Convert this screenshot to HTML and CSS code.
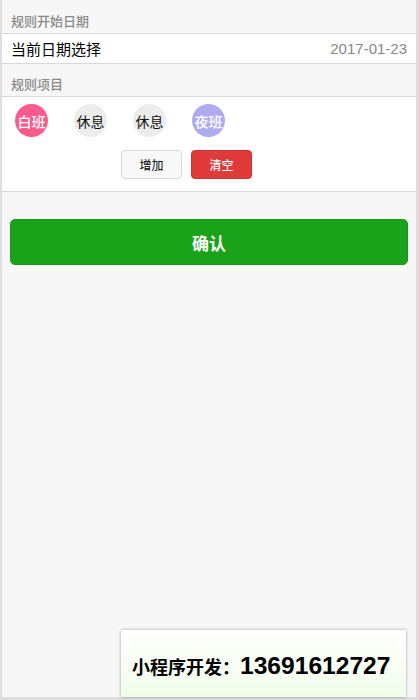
FILE: index.html
```html
<!DOCTYPE html>
<html lang="zh-CN">
<head>
<meta charset="utf-8">
<title>规则</title>
<link rel="stylesheet" href="styles.css">
</head>
<body>
<div class="frame">
  <div class="page">
    <div class="section-title section-title-first">规则开始日期</div>
    <div class="cell">
      <span class="cell-label">当前日期选择</span>
      <span class="cell-value">2017-01-23</span>
    </div>
    <div class="section-title">规则项目</div>
    <div class="panel">
      <div class="shifts">
        <span class="shift shift-day">白班</span>
        <span class="shift shift-rest">休息</span>
        <span class="shift shift-rest">休息</span>
        <span class="shift shift-night">夜班</span>
      </div>
      <div class="actions">
        <button class="btn btn-default">增加</button>
        <button class="btn btn-warn">清空</button>
      </div>
    </div>
    <div class="confirm-wrap">
      <button class="btn-primary">确认</button>
    </div>
  </div>
</div>
<div class="promo"><span class="promo-label">小程序开发：</span><span class="promo-phone">13691612727</span></div>
</body>
</html>
```
FILE: styles.css
```css
html, body {
  margin: 0;
  padding: 0;
  background: #dedede;
  font-family: "Noto Sans CJK SC", "Liberation Sans", sans-serif;
}
.frame {
  width: 419px;
  height: 700px;
  display: flex;
  background: #dedede;
}
.page {
  margin-left: 2px;
  width: 414px;
  height: 697px;
  background: #f7f7f7;
  display: flex;
  flex-direction: column;
}
.section-title {
  height: 33px;
  box-sizing: border-box;
  padding: 10px 0 0 9px;
  font-size: 13px;
  line-height: 20px;
  color: #8a8a8a;
  font-weight: 500;
  border-bottom: 1px solid #d9d9d9;
}
.section-title-first {
  height: 34px;
  padding-top: 11px;
}
.cell {
  height: 29px;
  background: #fff;
  border-bottom: 1px solid #d9d9d9;
  display: flex;
  align-items: center;
  justify-content: space-between;
  padding: 0 9px;
}
.cell-label {
  font-size: 15px;
  color: #000;
}
.cell-value {
  font-family: "Liberation Sans", sans-serif;
  font-size: 15px;
  color: #888;
}
.panel {
  background: #fff;
  height: 95px;
  box-sizing: border-box;
  border-bottom: 1px solid #d9d9d9;
  padding-top: 7px;
}
.shifts {
  display: flex;
  gap: 26px;
  padding-left: 13px;
}
.shift {
  width: 33px;
  height: 33px;
  border-radius: 50%;
  display: flex;
  align-items: center;
  justify-content: center;
  font-size: 14px;
  font-weight: 500;
  color: #fff;
}
.shift-day { background: #fb5a8d; }
.shift-rest { background: #ececec; color: #111; font-weight: 400; }
.shift-night { background: #b0abee; }
.actions {
  display: flex;
  gap: 9px;
  padding-left: 119px;
  margin-top: 13px;
}
.btn {
  width: 61px;
  height: 29px;
  border-radius: 4px;
  font-family: "Noto Sans CJK SC", sans-serif;
  font-size: 12px;
  padding: 0;
  cursor: pointer;
}
.btn-default {
  background: #f8f8f8;
  border: 1px solid #d8d8d8;
  color: #000;
}
.btn-warn {
  background: #e13a3b;
  border: 1px solid #d33232;
  color: #fff;
  font-weight: 500;
}
.confirm-wrap {
  padding: 27px 8px 0 8px;
}
.btn-primary {
  width: 398px;
  height: 46px;
  background: #1aa31a;
  border: 1px solid #169516;
  border-radius: 5px;
  color: #fff;
  font-family: "Noto Sans CJK SC", sans-serif;
  font-size: 17px;
  font-weight: 700;
  padding: 0;
}
.promo {
  position: absolute;
  left: 121px;
  top: 630px;
  width: 285px;
  height: 67px;
  box-sizing: border-box;
  background: linear-gradient(#ffffff, #f1fdea);
  box-shadow: 0 0 3px rgba(0, 0, 0, 0.35);
  display: flex;
  align-items: center;
  padding: 4px 0 0 11px;
  color: #000;
}
.promo-label {
  font-size: 18px;
  font-weight: 700;
}
.promo-phone {
  font-family: "Liberation Sans", sans-serif;
  font-size: 24.6px;
  font-weight: 700;
}
```
